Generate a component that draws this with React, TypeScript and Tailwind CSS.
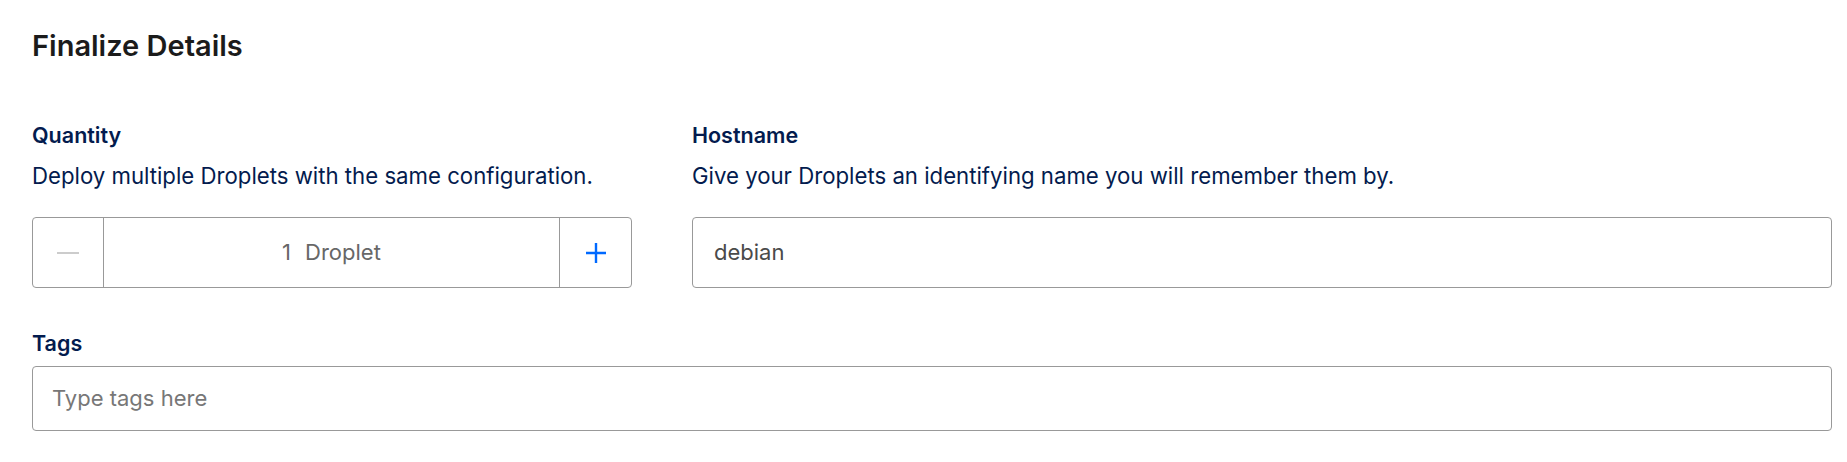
import React from "react";

const font = { fontFamily: '"Inter", "Open Sans", sans-serif' };

function Label({ children }: { children: React.ReactNode }) {
	return <div className="text-[21.5px] leading-[28px] font-semibold text-[#031b4e]">{children}</div>;
}

function Hint({ children }: { children: React.ReactNode }) {
	return <div className="mt-[13px] text-[22.2px] leading-[28px] text-[#031b4e]">{children}</div>;
}

export default function App() {
	return (
		<div className="w-full min-h-[462px] bg-white pl-[32px] pr-[15px] pt-[28px]" style={font}>
			{/* Title */}
			<h2 className="text-[29px] leading-[36px] font-semibold text-[#1b1b1b]">Finalize Details</h2>

			{/* Quantity + Hostname */}
			<div className="mt-[57px] grid grid-cols-[600px_1fr] gap-x-[60px]">
				<div className="flex flex-col">
					<Label>Quantity</Label>
					<Hint>Deploy multiple Droplets with the same configuration.</Hint>
					<div className="mt-[27px] flex h-[71px] rounded-[4px] border border-[#999]">
						<button className="flex w-[71px] items-center justify-center border-r border-[#999]">
							<span className="block h-[2px] w-[22px] bg-[#cccccc]" />
						</button>
						<div className="flex flex-1 items-center justify-center gap-[14px] text-[22px] text-[#676767]">
							<span>1</span>
							<span>Droplet</span>
						</div>
						<button className="flex w-[72px] items-center justify-center border-l border-[#999]">
							<svg width="22" height="22" viewBox="0 0 22 22" fill="none">
								<path d="M11 1v20M1 11h20" stroke="#0069ff" strokeWidth="2.4" />
							</svg>
						</button>
					</div>
				</div>

				<div className="flex flex-col">
					<Label>Hostname</Label>
					<Hint>Give your Droplets an identifying name you will remember them by.</Hint>
					<div className="mt-[27px] flex h-[71px] items-center rounded-[4px] border border-[#999] px-[21px] text-[22px] text-[#4a4a4a]">
						debian
					</div>
				</div>
			</div>

			{/* Tags */}
			<div className="mt-[41px] flex flex-col">
				<Label>Tags</Label>
				<div className="mt-[9px] flex h-[65px] items-center rounded-[4px] border border-[#999] px-[19px] text-[22px] text-[#777]">
					Type tags here
				</div>
			</div>
		</div>
	);
}
